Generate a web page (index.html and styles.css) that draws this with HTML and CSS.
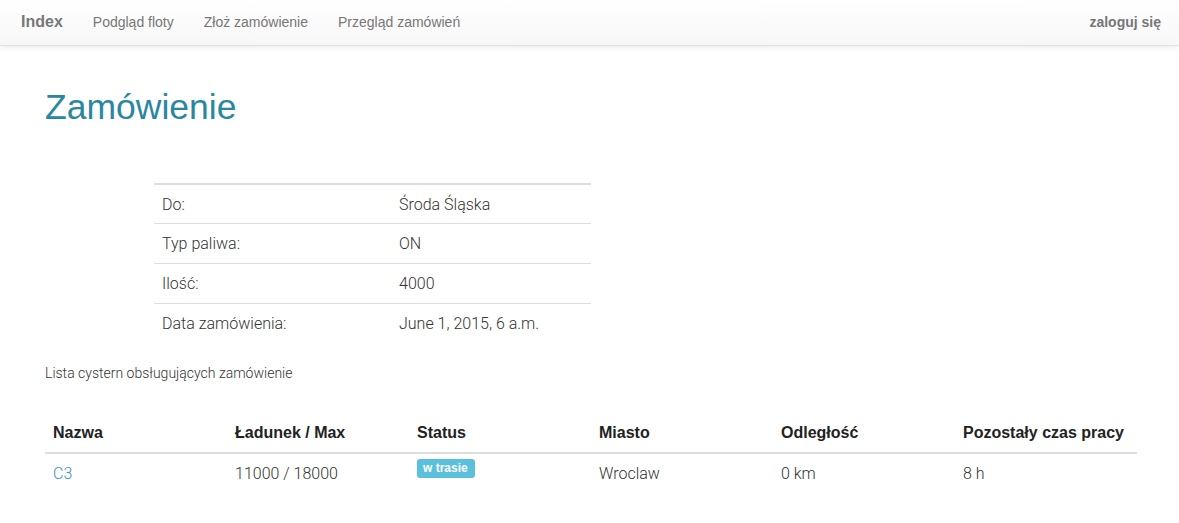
FILE: index.html
```html
<!DOCTYPE html>
<html lang="pl">
<head>
<meta charset="utf-8">
<title>Zamówienie</title>
<link rel="stylesheet" href="styles.css">
</head>
<body>
<nav class="navbar">
  <div class="nav-left">
    <a class="brand" href="#">Index</a>
    <a class="nav-link" href="#">Podgląd floty</a>
    <a class="nav-link" href="#">Złoż zamówienie</a>
    <a class="nav-link" href="#">Przegląd zamówień</a>
  </div>
  <a class="nav-login" href="#">zaloguj się</a>
</nav>
<main class="container">
  <h1 class="title">Zamówienie</h1>
  <table class="info">
    <tr><td>Do:</td><td>Środa Śląska</td></tr>
    <tr><td>Typ paliwa:</td><td>ON</td></tr>
    <tr><td>Ilość:</td><td>4000</td></tr>
    <tr><td>Data zamówienia:</td><td>June 1, 2015, 6 a.m.</td></tr>
  </table>
  <p class="caption">Lista cystern obsługujących zamówienie</p>
  <table class="list">
    <thead>
      <tr><th>Nazwa</th><th>Ładunek / Max</th><th>Status</th><th>Miasto</th><th>Odległość</th><th>Pozostały czas pracy</th></tr>
    </thead>
    <tbody>
      <tr><td><a class="link" href="#">C3</a></td><td>11000 / 18000</td><td><span class="badge">w trasie</span></td><td>Wroclaw</td><td>0 km</td><td>8 h</td></tr>
    </tbody>
  </table>
</main>
</body>
</html>
```

FILE: styles.css
```css
html, body {
  margin: 0;
  padding: 0;
  background: #fff;
}
body {
  font-family: Roboto, "Liberation Sans", Arial, sans-serif;
  font-weight: 300;
  color: #333;
  font-size: 16px;
}
a { text-decoration: none; }

.navbar {
  height: 45px;
  display: flex;
  align-items: center;
  justify-content: space-between;
  background: linear-gradient(to bottom, #ffffff 0%, #f7f7f7 100%);
  border-bottom: 1px solid #e0e0e0;
  box-shadow: 0 2px 6px rgba(0,0,0,0.07);
  padding: 0 18px 0 21px;
  font-family: "Liberation Sans", Arial, sans-serif;
}
.nav-left {
  display: flex;
  align-items: center;
  gap: 30px;
  margin-top: -2px;
}
.brand {
  font-size: 16px;
  font-weight: 700;
  color: #777;
}
.nav-link {
  font-size: 14px;
  color: #777;
  font-weight: 400;
}
.nav-login {
  font-size: 14px;
  font-weight: 700;
  color: #777;
  margin-top: -2px;
}

.container {
  padding: 0 42px 0 45px;
}
.title {
  font-family: "Liberation Sans", Arial, sans-serif;
  font-weight: 400;
  font-size: 35.5px;
  color: #2a87a0;
  margin: 41px 0 0;
  line-height: 40px;
}

.info {
  margin: 56px 0 0 109px;
  width: 437px;
  border-collapse: collapse;
  border-top: 2px solid #ddd;
}
.info td {
  height: 39px;
  padding: 0 8px;
  border-bottom: 1px solid #ddd;
  font-size: 16px;
  vertical-align: middle;
}
.info tr:first-child td { height: 38px; }
.info tr:last-child td { border-bottom: none; }
.info td:first-child { width: 221px; }

.caption {
  font-size: 14px;
  line-height: 20px;
  margin: 20px 0 0;
  color: #333;
}

.list {
  width: 100%;
  border-collapse: collapse;
  margin-top: 32px;
  table-layout: fixed;
}
.list th {
  font-family: "Liberation Sans", Arial, sans-serif;
  font-weight: 700;
  font-size: 16px;
  line-height: 20px;
  color: #222;
  text-align: left;
  padding: 8px 8px 9px;
  border-bottom: 2px solid #ddd;
}
.list td {
  font-size: 16px;
  padding: 10px 8px 8px;
  vertical-align: top;
  line-height: 20px;
}
.link { color: #3b8fc4; }
.badge {
  display: inline-block;
  background: #5bc0de;
  color: #fff;
  font-family: "Liberation Sans", Arial, sans-serif;
  font-weight: 700;
  font-size: 12px;
  line-height: 19px;
  padding: 0 7px 0 6px;
  border-radius: 3px;
  vertical-align: top;
  margin-top: -5px;
}
```
